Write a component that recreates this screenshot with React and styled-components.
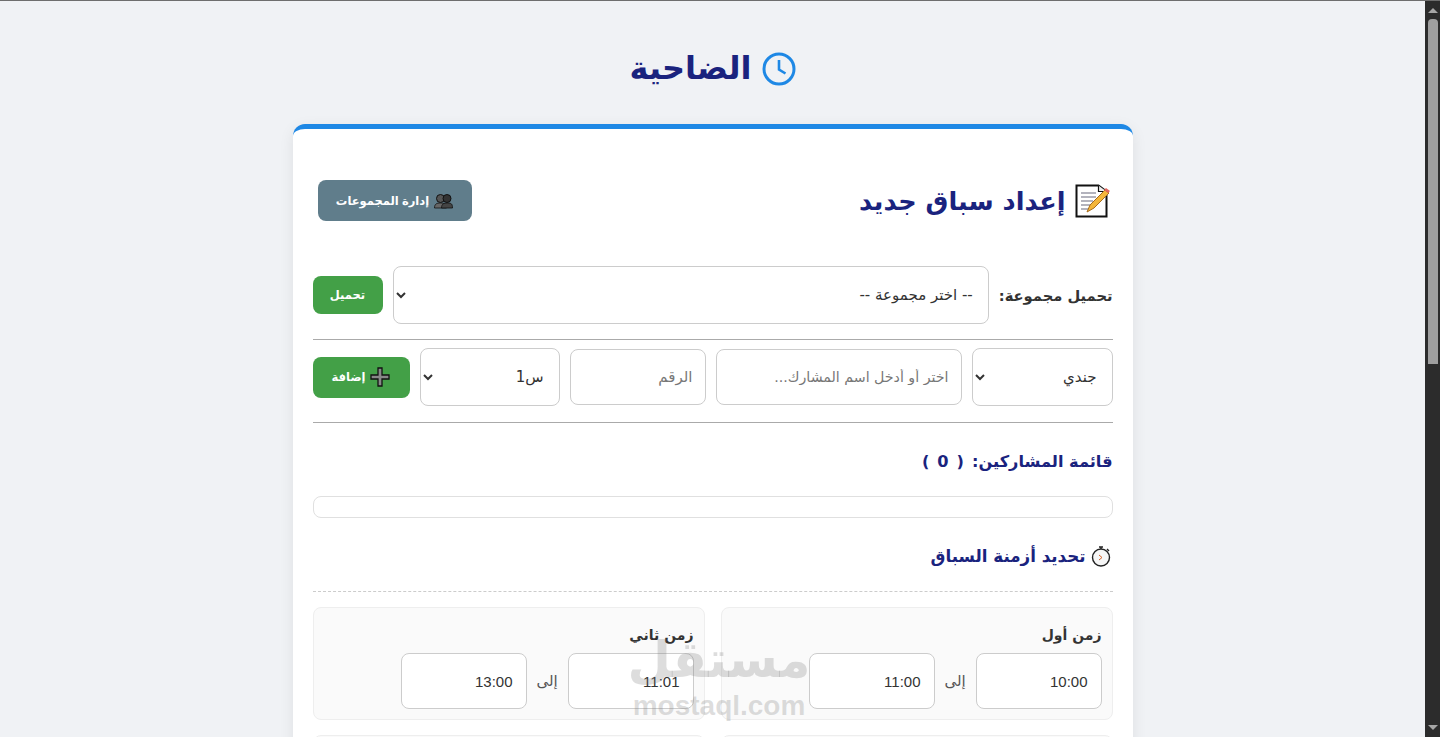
import React from 'react';
import styled, { createGlobalStyle } from 'styled-components';

const GlobalStyle = createGlobalStyle`
  html, body {
    margin: 0;
    padding: 0;
    height: 100%;
    overflow: hidden;
    background: #f0f2f5;
  }
  * {
    box-sizing: border-box;
  }
`;

const Shell = styled.div`
  display: flex;
  height: 737px;
  border-top: 1px solid #6e6e6e;
`;

const Page = styled.main`
  flex: 1;
  min-width: 0;
  height: 100%;
  overflow: hidden;
  position: relative;
  background: #f0f2f5;
  font-family: "DejaVu Sans", "Noto Sans", sans-serif;
  color: #333;
`;

const ScrollTrack = styled.div`
  width: 15px;
  flex: none;
  background: #2c2c2c;
  display: flex;
  flex-direction: column;
  align-items: center;
  padding-top: 7px;
`;

const Arrow = styled.div`
  width: 0;
  height: 0;
  border-left: 5px solid transparent;
  border-right: 5px solid transparent;
  border-${({ $down }) => ($down ? 'top' : 'bottom')}: 5px solid #a6a6a6;
`;

const Thumb = styled.div`
  width: 10px;
  height: 345px;
  margin-top: 6px;
  margin-left: 1px;
  margin-bottom: auto;
  background: #9f9f9f;
  border-radius: 4px 4px 0 0;
`;

const ArrowDown = styled(Arrow)`
  margin-bottom: 7px;
`;

const PageTitle = styled.h1`
  margin: 0;
  padding-top: 44px;
  height: 123px;
  display: flex;
  justify-content: center;
  align-items: flex-start;
  gap: 10px;
  font-size: 32px;
  line-height: 47px;
  font-weight: 700;
  color: #1a237e;
`;

const Card = styled.section`
  width: 840px;
  margin: 0 auto;
  background: #fff;
  border-top: 5px solid #1e88e5;
  border-radius: 12px;
  box-shadow: 0 4px 15px rgba(0, 0, 0, 0.08);
  padding: 20px;
`;

const CardHeader = styled.div`
  display: flex;
  justify-content: space-between;
  align-items: center;
  padding: 31px 0 45px 5px;
  height: 117px;
`;

const CardTitle = styled.h2`
  margin: 0;
  padding-right: 2px;
  display: flex;
  align-items: center;
  gap: 9px;
  font-size: 25.6px;
  font-weight: 700;
  color: #1a237e;
`;

const Button = styled.button`
  display: flex;
  align-items: center;
  justify-content: center;
  gap: 5px;
  border: none;
  border-radius: 8px;
  color: #fff;
  font-family: "Liberation Sans", "DejaVu Sans", sans-serif;
  font-weight: 700;
  font-size: 11.5px;
  flex: none;
  width: ${({ $w }) => $w}px;
  height: ${({ $h }) => $h}px;
  background: ${({ $bg }) => $bg || '#43a047'};
`;

const Row = styled.div`
  display: flex;
  align-items: center;
  gap: 10px;
`;

const LoadRow = styled(Row)`
  height: 58px;
  margin-bottom: 15px;
`;

const AddRow = styled(Row)`
  border-top: 1px solid #aaa;
  border-bottom: 1px solid #aaa;
  height: 84px;
  padding: 8px 0 16px;
`;

const Label = styled.label`
  font-size: 14.7px;
  font-weight: 700;
  color: #333;
  flex: none;
`;

const Select = styled.select`
  height: ${({ $h }) => $h || 58}px;
  width: ${({ $w }) => ($w ? `${$w}px` : 'auto')};
  flex: ${({ $w }) => ($w ? 'none' : 1)};
  min-width: 0;
  padding: 0 11px;
  background: #fff;
  border: 1px solid #ccc;
  border-radius: 8px;
  font-family: "DejaVu Sans", sans-serif;
  font-size: 15px;
  color: #333;
`;

const Input = styled.input`
  height: ${({ $h }) => $h || 56}px;
  width: ${({ $w }) => $w}px;
  flex: none;
  padding: 0 12px;
  background: #fff;
  border: 1px solid #ccc;
  border-radius: 8px;
  font-family: "DejaVu Sans", sans-serif;
  font-size: ${({ $fs }) => $fs || 15}px;
  color: #333;
  &::placeholder {
    color: #777;
  }
`;

const TimeInput = styled(Input)`
  font-family: "Liberation Sans", sans-serif;
  padding: 0 13px;
`;

const SectionTitle = styled.h3`
  margin: 0;
  display: flex;
  align-items: center;
  font-weight: 700;
  color: #1a237e;
`;

const CountTitle = styled(SectionTitle)`
  height: 73px;
  padding-top: 3px;
  gap: 8px;
  font-size: 16.2px;
`;

const CountValue = styled.span`
  display: flex;
  gap: 8px;
`;

const EmptyList = styled.div`
  height: 22px;
  border: 1px solid #e0e0e0;
  border-radius: 8px;
`;

const TimesTitle = styled(SectionTitle)`
  height: 74px;
  padding: 3px 2px 1px 0;
  gap: 5px;
  font-size: 16.7px;
  border-bottom: 1px dashed #ccc;
`;

const TimesGrid = styled.div`
  display: grid;
  grid-template-columns: 1fr 1fr;
  gap: 15px 16px;
  margin-top: 15px;
`;

const TimeCard = styled.div`
  height: 113px;
  padding: 14px 10px 10px;
  background: #fafafa;
  border: 1px solid #eee;
  border-radius: 8px;
`;

const TimeLabel = styled.div`
  font-size: 14px;
  font-weight: 700;
  color: #333;
  line-height: 26px;
  height: 31px;
`;

const To = styled.span`
  width: 41px;
  flex: none;
  text-align: center;
  font-size: 15px;
  color: #555;
`;

const TimeRow = styled.div`
  display: flex;
  align-items: center;
`;

const Watermark = styled.div`
  position: absolute;
  left: 631px;
  top: 628px;
  width: 176px;
  display: flex;
  flex-direction: column;
  align-items: center;
  color: rgba(120, 120, 120, 0.25);
  font-family: "Liberation Sans", sans-serif;
  font-weight: 700;
  pointer-events: none;
`;

const WatermarkAr = styled.div`
  font-family: "DejaVu Sans", sans-serif;
  font-size: 50px;
  line-height: 62px;
`;

const WatermarkEn = styled.div`
  font-size: 28px;
  line-height: 30px;
`;

const ClockIcon = () => (
  <svg width="34" height="34" viewBox="0 0 34 34" fill="none" stroke="#1e88e5" strokeWidth="3" style={{ marginTop: 7 }}>
    <circle cx="17" cy="17" r="15" />
    <path d="M17 8v9.5l6.5 4" strokeWidth="2.6" />
  </svg>
);

const MemoIcon = () => (
  <svg width="36" height="34" viewBox="0 0 36 34">
    <path d="M1.5 1.5h22l8 6v25h-30z" fill="#fff" stroke="#111" strokeWidth="2" />
    <path d="M23.5 1.5v6h8" fill="#eee" stroke="#111" strokeWidth="1.2" />
    <path d="M6 9h15M6 13h15M6 17h12M6 21h10M6 25h8" stroke="#9a9aa8" strokeWidth="1.4" />
    <path d="M12 28l3-7L30 6l4 3-15 15z" fill="#f4b63a" stroke="#a86c1c" strokeWidth="1" />
    <path d="M29 6l2-2 4 3-2 2z" fill="#e0665c" />
  </svg>
);

const PeopleIcon = () => (
  <svg width="19" height="16" viewBox="0 0 18 16">
    <path d="M0 15c0-4 2-5 6-5s6 1 6 5z" fill="#666" stroke="#111" strokeWidth="0.8" />
    <path d="M7 15c0-4 2-5 6-5s5 1 5 5z" fill="#444" stroke="#111" strokeWidth="0.8" />
    <circle cx="6" cy="5.5" r="4" fill="#555" stroke="#111" />
    <circle cx="12.5" cy="5.5" r="4" fill="#333" stroke="#111" />
  </svg>
);

const PlusIcon = () => (
  <svg width="20" height="20" viewBox="0 0 20 20">
    <path d="M8 1h4v7h7v4h-7v7H8v-7H1V8h7z" fill="#888" stroke="#111" strokeWidth="1.3" />
  </svg>
);

const StopwatchIcon = () => (
  <svg width="20" height="22" viewBox="0 0 20 22" fill="none">
    <circle cx="10" cy="12.5" r="8.5" fill="#f6f6f6" stroke="#222" strokeWidth="1.4" />
    <path d="M8 2h4M10 2v2M16 4l2 2" stroke="#222" strokeWidth="1.4" />
    <path d="M8 10l3 2.5L8 15" stroke="#d2622a" strokeWidth="1" />
  </svg>
);

const times = [
  { title: 'زمن أول', from: '10:00', to: '11:00' },
  { title: 'زمن ثاني', from: '11:01', to: '13:00' },
];

export default function App() {
  return (
    <>
      <GlobalStyle />
      <Shell>
        <Page dir="rtl">
          <PageTitle>
            <ClockIcon />
            الضاحية
          </PageTitle>
          <Card>
            <CardHeader>
              <CardTitle>
                <MemoIcon />
                إعداد سباق جديد
              </CardTitle>
              <Button $w={154} $h={41} $bg="#607d8b">
                <PeopleIcon />
                إدارة المجموعات
              </Button>
            </CardHeader>
            <LoadRow>
              <Label>تحميل مجموعة:</Label>
              <Select>
                <option>-- اختر مجموعة --</option>
              </Select>
              <Button $w={70} $h={38}>تحميل</Button>
            </LoadRow>
            <AddRow>
              <Select $w={141}>
                <option>جندي</option>
              </Select>
              <Input $w={246} $fs={14.2} placeholder="اختر أو أدخل اسم المشارك..." />
              <Input $w={136} placeholder="الرقم" />
              <Select $w={140}>
                <option>س1</option>
              </Select>
              <Button $w={97} $h={41}>
                <PlusIcon />
                إضافة
              </Button>
            </AddRow>
            <CountTitle>
              <span>قائمة المشاركين:</span>
              <CountValue>
                <span>(</span>
                <span>0</span>
                <span>)</span>
              </CountValue>
            </CountTitle>
            <EmptyList />
            <TimesTitle>
              <StopwatchIcon />
              تحديد أزمنة السباق
            </TimesTitle>
            <TimesGrid>
              {times.map((t) => (
                <TimeCard key={t.title}>
                  <TimeLabel>{t.title}</TimeLabel>
                  <TimeRow>
                    <TimeInput $w={126} defaultValue={t.from} />
                    <To>إلى</To>
                    <TimeInput $w={126} defaultValue={t.to} />
                  </TimeRow>
                </TimeCard>
              ))}
              <TimeCard />
              <TimeCard />
            </TimesGrid>
          </Card>
          <Watermark>
            <WatermarkAr>مستقل</WatermarkAr>
            <WatermarkEn>mostaql.com</WatermarkEn>
          </Watermark>
        </Page>
        <ScrollTrack>
          <Arrow />
          <Thumb />
          <ArrowDown $down />
        </ScrollTrack>
      </Shell>
    </>
  );
}
